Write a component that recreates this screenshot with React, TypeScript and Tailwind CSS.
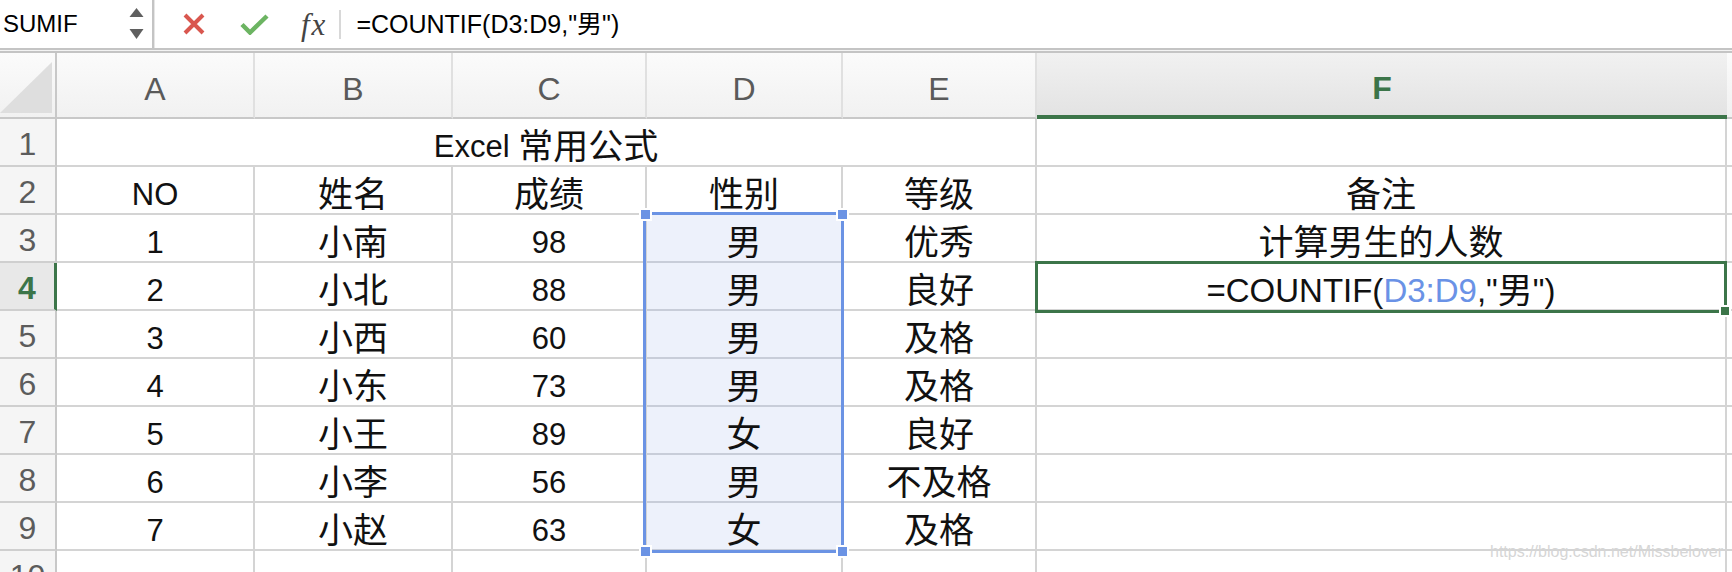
import React from 'react'

const SANS = "font-['Liberation_Sans','Noto_Sans_CJK_SC',sans-serif]"

// splits latin / CJK runs so the CJK glyphs can be sized like the Mac sheet
function Txt({ s, cjk = 'text-[35px]' }: { s: string; cjk?: string }) {
  const runs = s.match(/[\u4e00-\u9fff]+|[^\u4e00-\u9fff]+/g) ?? []
  return (
    <>
      {runs.map((r, i) =>
        /[\u4e00-\u9fff]/.test(r) ? (
          <span key={i} className={cjk}>{r}</span>
        ) : (
          <span key={i} className="whitespace-pre">{r}</span>
        ),
      )}
    </>
  )
}

const cols = ['A', 'B', 'C', 'D', 'E', 'F']

const students = [
  ['1', '小南', '98', '男', '优秀'],
  ['2', '小北', '88', '男', '良好'],
  ['3', '小西', '60', '男', '及格'],
  ['4', '小东', '73', '男', '及格'],
  ['5', '小王', '89', '女', '良好'],
  ['6', '小李', '56', '男', '不及格'],
  ['7', '小赵', '63', '女', '及格'],
]

const cellBase =
  'h-[48px] border-r-2 border-b-2 flex items-center justify-center pt-2 text-[31px] leading-none text-[#111]'

function RowHead({ n }: { n: number }) {
  const active = n === 4
  return (
    <div
      className={
        active
          ? 'h-[48px] border-b-2 border-b-[#cfcfcf] border-r-[3px] border-r-[#3c7549] bg-[#e8e8e8] flex items-center justify-center pt-1 text-[32px] leading-none font-bold text-[#3c7549]'
          : 'h-[48px] border-b-2 border-b-[#cfcfcf] border-r-2 border-r-[#c8c8c8] bg-[#f5f5f5] flex items-center justify-center pt-1 text-[32px] leading-none text-[#5c5c5c]'
      }
    >
      {n}
    </div>
  )
}

function Cell({ s = '', sel = false }: { s?: string; sel?: boolean }) {
  return (
    <div className={sel ? `${cellBase} bg-[#edf1fb] border-[#c8cdd9]` : `${cellBase} border-[#d4d4d4]`}>
      <Txt s={s} />
    </div>
  )
}

function Tail() {
  return <div className="h-[48px] border-b-2 border-[#d4d4d4]" />
}

export default function App() {
  return (
    <div className={`relative w-[1732px] h-[572px] overflow-hidden bg-white ${SANS}`}>
      {/* formula bar */}
      <div className="flex h-[48px] items-center">
        <div className="flex h-full w-[152px] items-center pl-[3px] pr-[8px]">
          <span className="text-[24px] leading-none text-black">SUMIF</span>
          <svg className="ml-auto" width="15" height="32" viewBox="0 0 15 32">
            <polygon points="7.5,0 14.5,9 0.5,9" fill="#5f5f5f" />
            <polygon points="0.5,21 14.5,21 7.5,31" fill="#5f5f5f" />
          </svg>
        </div>
        <div className="h-full w-[3px] border-l-2 border-[#c4c4c4] bg-[#e6e6e6]" />
        <svg className="ml-[28px]" width="22" height="22" viewBox="0 0 22 22">
          <path d="M2 2 L20 20 M20 2 L2 20" stroke="#d9574f" strokeWidth="4" />
        </svg>
        <svg className="ml-[35px]" width="29" height="21" viewBox="0 0 29 21">
          <path d="M2 10.5 L10 18.5 L27 2" stroke="#6cb462" strokeWidth="4.5" fill="none" />
        </svg>
        <span className="ml-[32px] font-['Liberation_Serif',serif] text-[31px] italic leading-none tracking-[2px] text-[#444]">
          fx
        </span>
        <div className="ml-[12px] h-[29px] w-[2px] bg-[#d8d8d8]" />
        <span className="ml-[15px] text-[25px] leading-none text-black">=COUNTIF(D3:D9,"男")</span>
      </div>
      <div className="h-[5px] border-y-2 border-[#c4c4c4] bg-[#f3f3f3]" />

      {/* sheet */}
      <div className="grid grid-cols-[57px_198px_198px_194px_196px_194px_690px_5px]">
        {/* column headers */}
        <div className="relative h-[66px] border-r-2 border-b-2 border-r-[#c8c8c8] border-b-[#c8c8c8] bg-gradient-to-b from-[#fbfbfb] to-[#f1f1f1]">
          <svg className="absolute left-0 top-[9px]" width="52" height="52" viewBox="0 0 52 52">
            <polygon points="52,0 52,51 0,51" fill="#dedede" />
          </svg>
        </div>
        {cols.map((c) =>
          c === 'F' ? (
            <div
              key={c}
              className="flex h-[66px] items-center justify-center border-b-[4px] border-[#3c7549] bg-gradient-to-b from-[#f1f1f1] to-[#e3e3e3] pt-2 text-[32px] font-bold leading-none text-[#3c7549]"
            >
              {c}
            </div>
          ) : (
            <div
              key={c}
              className="flex h-[66px] items-center justify-center border-r-2 border-b-2 border-r-[#e0e0e0] border-b-[#c8c8c8] bg-gradient-to-b from-[#fbfbfb] to-[#f1f1f1] pt-2 text-[32px] leading-none text-[#5a5a5a]"
            >
              {c}
            </div>
          ),
        )}
        <div className="h-[66px] border-b-2 border-[#c8c8c8] bg-gradient-to-b from-[#fbfbfb] to-[#f1f1f1]" />

        {/* row 1 */}
        <RowHead n={1} />
        <div className={`${cellBase} col-span-5 border-[#d4d4d4]`}>
          <Txt s="Excel 常用公式" />
        </div>
        <Cell />
        <Tail />

        {/* row 2 */}
        <RowHead n={2} />
        {['NO', '姓名', '成绩', '性别', '等级', '备注'].map((t, i) => (
          <Cell key={i} s={t} />
        ))}
        <Tail />

        {/* rows 3-9 */}
        {students.map((r, i) => (
          <React.Fragment key={i}>
            <RowHead n={i + 3} />
            <Cell s={r[0]} />
            <Cell s={r[1]} />
            <Cell s={r[2]} />
            <Cell s={r[3]} sel />
            <Cell s={r[4]} />
            {i === 0 ? (
              <Cell s="计算男生的人数" />
            ) : i === 1 ? (
              <div className={`${cellBase} border-[#d4d4d4] text-[33px]`}>
                <span>=COUNTIF(</span>
                <span className="text-[#6a92e6]">D3:D9</span>
                <span>,"</span>
                <span className="text-[35px]">男</span>
                <span>")</span>
              </div>
            ) : (
              <Cell />
            )}
            <Tail />
          </React.Fragment>
        ))}

        {/* row 10 */}
        <RowHead n={10} />
        {cols.map((c) => (
          <Cell key={c} />
        ))}
        <Tail />
      </div>

      {/* selection D3:D9 */}
      <div className="absolute left-[643px] top-[212px] h-[341px] w-[201px] border-[3px] border-[#6b93e4]" />
      <div className="absolute left-[639px] top-[208px] h-[13px] w-[13px] border-2 border-white bg-[#6b93e4]" />
      <div className="absolute left-[836px] top-[208px] h-[13px] w-[13px] border-2 border-white bg-[#6b93e4]" />
      <div className="absolute left-[639px] top-[545px] h-[13px] w-[13px] border-2 border-white bg-[#6b93e4]" />
      <div className="absolute left-[836px] top-[545px] h-[13px] w-[13px] border-2 border-white bg-[#6b93e4]" />

      {/* active cell F4 */}
      <div className="absolute left-[1035px] top-[261px] h-[52px] w-[692px] border-[3px] border-[#3c7549]" />
      <div className="absolute left-[1719px] top-[305px] h-[12px] w-[12px] border-2 border-white bg-[#3c7549]" />

      <div className="absolute left-[1490px] top-[544px] text-[16px] leading-none text-[#d6d6d6]">
        https://blog.csdn.net/Missbelover
      </div>
    </div>
  )
}
